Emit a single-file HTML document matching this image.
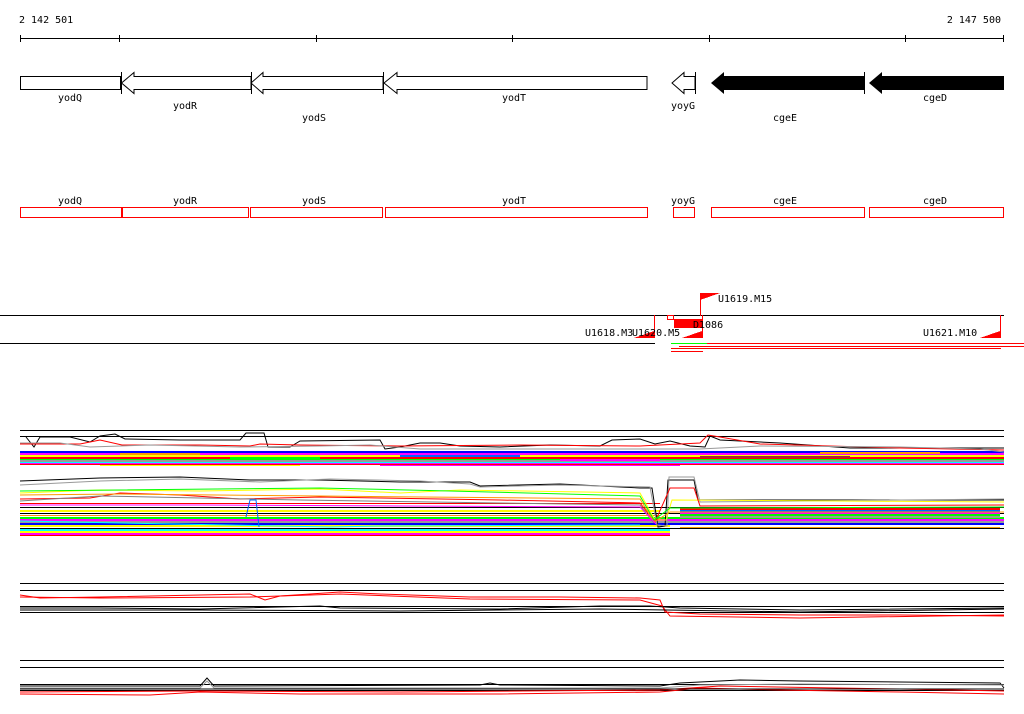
<!DOCTYPE html>
<html><head><meta charset="utf-8"><style>
html,body{margin:0;padding:0;background:#fff;width:1024px;height:714px;overflow:hidden}
svg{display:block}
text{font-family:"DejaVu Sans Mono","Liberation Mono",monospace;font-size:10px;fill:#000}
</style></head><body>
<svg width="1024" height="714" viewBox="0 0 1024 714" shape-rendering="crispEdges">
<text x="19" y="23">2 142 501</text>
<text x="1001" y="23" text-anchor="end">2 147 500</text>
<line x1="20" y1="38.5" x2="1004" y2="38.5" stroke="#000"/>
<g stroke="#000"><line x1="20.5" y1="35" x2="20.5" y2="42"/><line x1="119.5" y1="35" x2="119.5" y2="42"/><line x1="316.5" y1="35" x2="316.5" y2="42"/><line x1="512.5" y1="35" x2="512.5" y2="42"/><line x1="709.5" y1="35" x2="709.5" y2="42"/><line x1="905.5" y1="35" x2="905.5" y2="42"/><line x1="1003.5" y1="35" x2="1003.5" y2="42"/></g>
<g fill="#fff" stroke="#000" shape-rendering="auto">
<rect x="20.5" y="76.5" width="100" height="13"/>
<path d="M121.5 83 L134 72.5 L134 76.5 L251 76.5 L251 89.5 L134 89.5 L134 93.5 Z"/>
<line x1="121.5" y1="72" x2="121.5" y2="94"/>
<path d="M251 83 L263 72.5 L263 76.5 L383 76.5 L383 89.5 L263 89.5 L263 93.5 Z"/>
<line x1="251.5" y1="72" x2="251.5" y2="94"/>
<path d="M384 83 L397 72.5 L397 76.5 L647 76.5 L647 89.5 L397 89.5 L397 93.5 Z"/>
<line x1="383.5" y1="72" x2="383.5" y2="94"/>
<path d="M672 83 L684 72.5 L684 76.5 L695 76.5 L695 89.5 L684 89.5 L684 93.5 Z"/>
<line x1="695.5" y1="72" x2="695.5" y2="94"/>
</g>
<path d="M711 83 L724 72 L724 76 L864 76 L864 90 L724 90 L724 94 Z" fill="#000" shape-rendering="auto"/>
<line x1="864.5" y1="72" x2="864.5" y2="94" stroke="#000"/>
<path d="M869 83 L882 72 L882 76 L1004 76 L1004 90 L882 90 L882 94 Z" fill="#000" shape-rendering="auto"/>
<g text-anchor="middle">
<text x="70" y="101">yodQ</text><text x="185" y="109">yodR</text><text x="314" y="121">yodS</text><text x="514" y="101">yodT</text><text x="683" y="109">yoyG</text><text x="785" y="121">cgeE</text><text x="935" y="101">cgeD</text>
<text x="70" y="204">yodQ</text><text x="185" y="204">yodR</text><text x="314" y="204">yodS</text><text x="514" y="204">yodT</text><text x="683" y="204">yoyG</text><text x="785" y="204">cgeE</text><text x="935" y="204">cgeD</text>
</g>
<g fill="none">
<rect x="20.5" y="207.5" width="101" height="10" stroke="#f00"/>
<rect x="122.5" y="207.5" width="126" height="10" stroke="#f00"/>
<rect x="250.5" y="207.5" width="132" height="10" stroke="#f00"/>
<rect x="385.5" y="207.5" width="262" height="10" stroke="#f00"/>
<rect x="673.5" y="207.5" width="21" height="10" stroke="#f00"/>
<rect x="711.5" y="207.5" width="153" height="10" stroke="#f00"/>
<rect x="869.5" y="207.5" width="134" height="10" stroke="#f00"/>
</g>
<line x1="0" y1="315.5" x2="1004" y2="315.5" stroke="#000"/>
<text x="718" y="302">U1619.M15</text>
<line x1="700.5" y1="293" x2="700.5" y2="316" stroke="#f00"/>
<path d="M700 293 L720 293 L700 300 Z" fill="#f00"/>
<line x1="654.5" y1="315" x2="654.5" y2="338" stroke="#f00"/>
<path d="M654 338 L634 338 L654 331 Z" fill="#f00"/>
<line x1="702.5" y1="315" x2="702.5" y2="338" stroke="#f00"/>
<path d="M702 338 L682 338 L702 331 Z" fill="#f00"/>
<line x1="1000.5" y1="315" x2="1000.5" y2="338" stroke="#f00"/>
<path d="M1000 338 L980 338 L1000 331 Z" fill="#f00"/>
<rect x="667.5" y="315.5" width="6" height="4" fill="none" stroke="#f00"/>
<rect x="674" y="319" width="28" height="9" fill="#f00"/>
<text x="585" y="336">U1618.M3</text><text x="632" y="336">U1620.M5</text>
<text x="693" y="328">D1086</text>
<text x="923" y="336">U1621.M10</text>
<line x1="0" y1="343.5" x2="655" y2="343.5" stroke="#000"/>
<line x1="671" y1="343.5" x2="707" y2="343.5" stroke="#0f0"/>
<line x1="707" y1="343.5" x2="1024" y2="343.5" stroke="#f00"/>
<line x1="679" y1="346.5" x2="1024" y2="346.5" stroke="#f00"/>
<line x1="671" y1="348.5" x2="1001" y2="348.5" stroke="#f00"/>
<line x1="671" y1="351.5" x2="703" y2="351.5" stroke="#f00"/>
<g stroke="#000"><line x1="20" y1="430.5" x2="1004" y2="430.5"/><line x1="20" y1="436.5" x2="1004" y2="436.5"/><line x1="20" y1="452.5" x2="1004" y2="452.5"/><line x1="20" y1="507.5" x2="1004" y2="507.5"/><line x1="20" y1="513.5" x2="1004" y2="513.5"/><line x1="20" y1="528.5" x2="1004" y2="528.5"/></g>
<g>
<rect x="20" y="451" width="984" height="2" fill="#00f"/>
<rect x="20" y="453" width="984" height="2" fill="#f0f"/>
<rect x="20" y="455" width="984" height="2" fill="#ff0"/>
<rect x="20" y="457" width="984" height="2" fill="#f00"/>
<rect x="20" y="459" width="984" height="1" fill="#0f0"/>
<rect x="20" y="460" width="984" height="2" fill="#999"/>
<rect x="20" y="462" width="984" height="1" fill="#0ff"/>
<rect x="20" y="463" width="984" height="1" fill="#f0f"/>
<rect x="120" y="453" width="80" height="2" fill="#f90"/>
<rect x="230" y="457" width="90" height="2" fill="#0f0"/>
<rect x="400" y="455" width="120" height="2" fill="#06f"/>
<rect x="560" y="459" width="100" height="2" fill="#f0f"/>
<rect x="700" y="456" width="150" height="2" fill="#a52a2a"/>
<rect x="820" y="452" width="120" height="2" fill="#f90"/>
<rect x="20" y="464" width="984" height="1" fill="#f00"/>
<rect x="100" y="465" width="200" height="1" fill="#ff0"/>
<rect x="380" y="465" width="300" height="1" fill="#f0f"/>
<rect x="20" y="517" width="984" height="2" fill="#0f0"/>
<rect x="20" y="519" width="984" height="2" fill="#f0f"/>
<rect x="20" y="521" width="984" height="2" fill="#999"/>
<rect x="20" y="523" width="984" height="2" fill="#00f"/>
<rect x="20" y="525" width="650" height="2" fill="#ff0"/>
<rect x="20" y="529" width="650" height="2" fill="#0ff"/>
<rect x="20" y="531" width="650" height="2" fill="#ff0"/>
<rect x="20" y="533" width="650" height="2" fill="#f0f"/>
<rect x="20" y="535" width="650" height="1" fill="#f00"/>
<rect x="680" y="508" width="320" height="2" fill="#f00"/>
<rect x="680" y="510" width="320" height="2" fill="#06f"/>
<rect x="680" y="512" width="320" height="2" fill="#f0f"/>
<rect x="680" y="514" width="320" height="2" fill="#0f0"/>
<rect x="680" y="516" width="320" height="2" fill="#999"/>
<rect x="20" y="503" width="640" height="1" fill="#f00"/>
<rect x="20" y="510" width="640" height="2" fill="#ff0"/>
<rect x="20" y="515" width="640" height="1" fill="#f90"/>
<rect x="680" y="527" width="320" height="1" fill="#f90"/>
</g>
<g shape-rendering="auto" fill="none" stroke-width="1">
<polyline stroke="#000" points="26,437 34,447 40,437 70,437 90,442 100,436 115,434 125,439 180,440 240,440 246,433 264,433 268,447 290,447 300,441 380,440 385,449 400,447 420,443 440,443 460,446 500,447 550,445 600,446 612,440 640,439 655,444 670,441 690,446 705,447 710,436 720,440 780,443 850,448 1004,448"/>
<polyline stroke="#f00" points="20,444 80,444 100,440 122,445 200,445 250,446 260,444 300,445 400,446 520,445 640,446 700,443 708,435 720,437 760,444 900,448 1004,450"/>
<polyline stroke="#999" points="20,443 60,443 90,447 150,445 240,447 320,446 370,445 420,449 700,449 760,446 900,447 980,449 1004,452"/>
<polyline stroke="#000" points="20,481 100,478 180,477 250,480 320,480 400,482 470,482 480,486 560,484 640,488 652,488 658,527 665,526 668,480 694,480 698,500 1004,500"/>
<polyline stroke="#999" points="20,485 100,481 180,479 260,482 330,479 420,481 470,484 480,487 560,485 650,487 657,525 667,526 669,477 694,477 700,502 1004,499"/>
<polyline stroke="#ff0" points="20,493 100,490 200,491 320,489 400,493 460,490 640,493 655,520 666,520 672,500 1004,502"/>
<polyline stroke="#f00" points="20,499 90,498 120,493 180,495 240,499 320,497 380,498 500,500 640,503 655,522 670,488 694,488 700,506 1004,505"/>
<polyline stroke="#808080" points="20,501 100,496 200,498 300,500 500,503 640,505 654,523"/>
<polyline stroke="#0f0" points="20,491 120,490 320,488 450,491 640,496 654,520 670,508 1004,507"/>
<polyline stroke="#f90" points="20,495 120,494 320,496 640,499 654,522 670,512 1004,512"/>
<polyline stroke="#f0f" points="20,505 200,505 400,506 640,507 656,524"/>
<polyline stroke="#0ff" points="20,521 330,527 380,526 640,525"/>
<polyline stroke="#06f" points="246,517 250,500 256,500 259,527"/>
</g>
<g stroke="#000"><line x1="20" y1="583.5" x2="1004" y2="583.5"/><line x1="20" y1="590.5" x2="1004" y2="590.5"/><line x1="20" y1="606.5" x2="1004" y2="606.5"/><line x1="20" y1="612.5" x2="1004" y2="612.5"/></g>
<g shape-rendering="auto" fill="none">
<polyline stroke="#f00" points="20,595 40,598 100,597 200,595 250,594 265,600 280,596 340,592 380,594 470,597 560,597 640,598 660,600 665,612 700,614 800,615 900,615 1004,616"/>
<polyline stroke="#f00" points="20,597 100,598 250,597 340,594 470,599 640,600 662,606 670,616 800,618 1004,615"/>
<polyline stroke="#000" points="20,608 100,608 200,609 320,606 340,608 500,609 600,606 650,606 680,608 800,610 1004,608"/>
<polyline stroke="#000" points="20,610 200,610 400,611 600,609 800,612 1004,609"/>
</g>
<g stroke="#000"><line x1="20" y1="660.5" x2="1004" y2="660.5"/><line x1="20" y1="667.5" x2="1004" y2="667.5"/><line x1="20" y1="684.5" x2="1004" y2="684.5"/><line x1="20" y1="690.5" x2="1004" y2="690.5"/></g>
<g shape-rendering="auto" fill="none">
<polyline stroke="#000" points="20,686 200,686 207,678 214,686 480,685 490,683 500,685 660,686 680,683 740,680 800,681 900,682 1000,683 1004,688"/>
<polyline stroke="#999" points="20,688 200,688 207,681 214,688 660,688 700,685 800,684 1004,685"/>
<polyline stroke="#f00" points="20,694 150,695 200,692 300,694 500,694 660,692 700,688 780,690 900,692 1004,694"/>
<polyline stroke="#f00" points="20,692 200,691 400,692 660,690 720,686 900,689 1004,691"/>
<polyline stroke="#000" points="20,689 400,689 700,689 1004,689"/>
</g>
</svg>
</body></html>
